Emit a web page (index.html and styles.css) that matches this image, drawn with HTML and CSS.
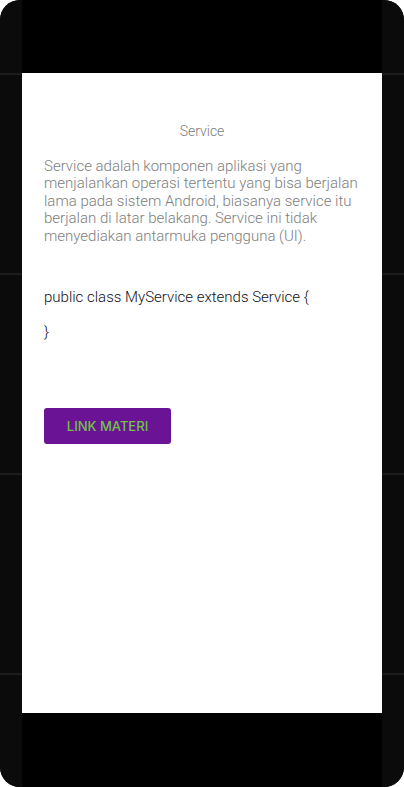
FILE: index.html
```html
<!DOCTYPE html>
<html>
<head>
<meta charset="utf-8">
<link rel="stylesheet" href="styles.css">
</head>
<body>
<div class="device">
  <div class="strip">
    <div class="seg seg-first"></div>
    <div class="seg"></div>
    <div class="seg"></div>
    <div class="seg"></div>
    <div class="seg seg-last"></div>
  </div>
  <div class="screen">
    <div class="bar-top"></div>
    <main class="content">
      <h1 class="title">Service</h1>
      <p class="desc">Service adalah komponen aplikasi yang menjalankan operasi tertentu yang bisa berjalan lama pada sistem Android, biasanya service itu berjalan di latar belakang. Service ini tidak menyediakan antarmuka pengguna (UI).</p>
      <pre class="code">public class MyService extends Service {

}</pre>
      <button class="btn">LINK MATERI</button>
    </main>
    <div class="bar-bottom"></div>
  </div>
  <div class="strip">
    <div class="seg seg-first"></div>
    <div class="seg"></div>
    <div class="seg"></div>
    <div class="seg"></div>
    <div class="seg seg-last"></div>
  </div>
</div>
</body>
</html>
```

FILE: styles.css
```css
html, body {
  margin: 0;
  padding: 0;
  background: #ffffff;
}

.device {
  width: 404px;
  height: 787px;
  display: flex;
  border-radius: 20px;
  overflow: hidden;
  background: #0b0b0b;
}

.strip {
  width: 22px;
  display: flex;
  flex-direction: column;
  background: #0b0b0b;
}

.seg {
  height: 198px;
  border-top: 2px solid #1c1c1c;
}

.seg-first {
  height: 73px;
  border-top: none;
}

.seg-last {
  flex: 1;
}

.screen {
  width: 360px;
  display: flex;
  flex-direction: column;
}

.bar-top {
  height: 73px;
  background: #000;
}

.bar-bottom {
  flex: 1;
  background: #000;
}

.content {
  height: 640px;
  background: #fff;
  padding: 50px 22px 0 22px;
  box-sizing: border-box;
  display: flex;
  flex-direction: column;
  align-items: flex-start;
  font-family: Roboto, "Liberation Sans", sans-serif;
}

.title {
  align-self: stretch;
  margin: 0;
  text-align: center;
  font-size: 14px;
  line-height: 16px;
  font-weight: 300;
  color: #7c7c7c;
}

.desc {
  margin: 19px 0 0 0;
  font-size: 15px;
  line-height: 17.4px;
  font-weight: 300;
  color: #7e7e7e;
}

.code {
  margin: 44px 0 0 0;
  font-family: Roboto, "Liberation Sans", sans-serif;
  font-size: 15px;
  line-height: 17.4px;
  font-weight: 300;
  color: #101020;
  white-space: pre;
}

.btn {
  margin-top: 67px;
  width: 127px;
  height: 36px;
  border: none;
  border-radius: 3px;
  background: #6a1495;
  color: #74c247;
  font-family: Inter, "Open Sans", sans-serif;
  font-size: 13px;
  font-weight: 500;
  padding: 0;
}
```
